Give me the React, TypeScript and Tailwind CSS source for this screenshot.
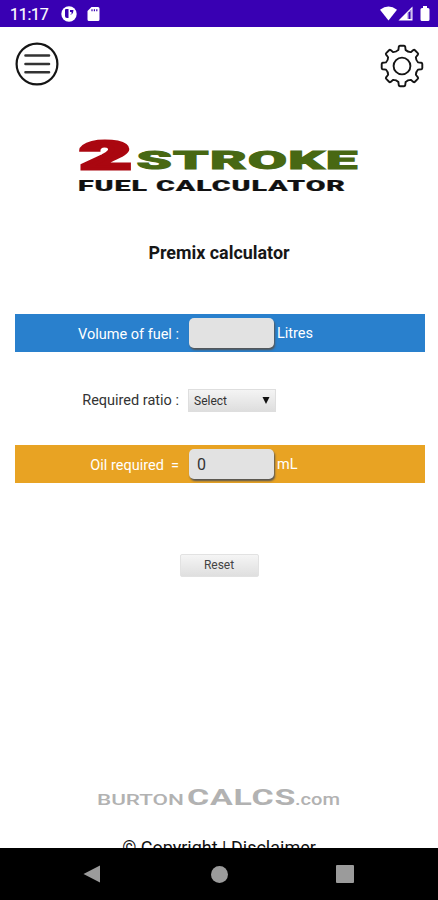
import React from "react";

const point = (x: number, y: number, turn: number) => {
  const a = (turn * Math.PI) / 180;
  const px = x * Math.cos(a) - y * Math.sin(a);
  const py = x * Math.sin(a) + y * Math.cos(a);
  return `${px.toFixed(2)} ${py.toFixed(2)}`;
};

// Eight rounded teeth joined by curved valleys.
const gearPath =
  [0, 45, 90, 135, 180, 225, 270, 315]
    .map(
      (t, i) =>
        `${i === 0 ? "M" : "L"}${point(-3.6, -16, t)} L${point(-3.2, -19.3, t)} Q${point(-3, -20.3, t)} ${point(-2, -20.3, t)} L${point(2, -20.3, t)} Q${point(3, -20.3, t)} ${point(3.2, -19.3, t)} L${point(3.6, -16, t)} Q${point(5.8, -13.8, t)} ${point(8.8, -13.9, t)}`
    )
    .join(" ") + "Z";

function StatusBar() {
  return (
    <div className="flex h-[27px] shrink-0 items-center bg-[#3900b3] pl-[10px] pr-[8px] text-white">
      <span className="w-[51px] pt-[2px] text-[16px] leading-none tracking-[-0.3px] [-webkit-text-stroke:0.2px_white]">11:17</span>
      <svg className="mt-px h-4 w-4" viewBox="0 0 16 16">
        <circle cx="8" cy="8" r="7.7" fill="white" />
        <path d="M4 4Q4 3 5 3h2.500v9H6Q4 12 4 10z" fill="#3900b3" />
        <path d="M9 4h3.500q0 3-2 4.500H9z" fill="#3900b3" />
        <rect x="8.500" y="6" width="2" height="2.500" fill="white" />
      </svg>
      <svg className="ml-[10px] mt-px h-4 w-[13px]" viewBox="0 0 13 16">
        <path d="M4.500 1H11a1.500 1.500 0 0 1 1.500 1.500v11A1.500 1.500 0 0 1 11 15H2a1.500 1.500 0 0 1-1.500-1.500V5z" fill="white" />
        <path d="M5 3.200v2M7.400 3.200v2M9.800 3.200v2" stroke="#3900b3" strokeWidth="1.200" />
      </svg>
      <div className="flex-1" />
      <svg className="mr-px h-[15px] w-[17px]" viewBox="0 0 17 15">
        <path d="M0 3.700Q8.500-2.700 17 3.700L8.500 14.500z" fill="white" />
      </svg>
      <svg className="h-[15px] w-[15px]" viewBox="0 0 15 15">
        <path d="M.500 14.500L14.500.500v14z" fill="white" />
        <path d="M9.500 7l4-4v10h-4z" fill="#9c80dc" />
        <path d="M11.500 6v7" stroke="#3900b3" strokeWidth="1.500" />
      </svg>
      <svg className="ml-[7px] h-[15px] w-[10px]" viewBox="0 0 10 15">
        <path d="M3 0h4v2h1q1.500 0 1.500 1.500v10Q9.500 15 8 15H2Q.500 15 .500 13.500v-10Q.500 2 2 2h1z" fill="white" />
      </svg>
    </div>
  );
}

function FieldBox({ value }: { value: string }) {
  return (
    <div className="flex h-[30px] w-[85px] items-center rounded-[5px] bg-[#e2e2e2] pl-[8px] pt-px text-[16px] text-[#333] shadow-[1px_2px_2px_#555]">
      {value}
    </div>
  );
}

export default function App() {
  return (
    <div className="flex h-[900px] w-[438px] flex-col overflow-hidden bg-white font-['Roboto',sans-serif]">
      <StatusBar />
      <main className="flex h-[821px] shrink-0 flex-col items-center overflow-hidden [&>*]:shrink-0">
        <header className="flex w-full justify-between pl-[15px] pr-[14px] pt-[15px]">
          <svg className="h-11 w-11" viewBox="0 0 44 44" fill="none" stroke="#151515">
            <circle cx="22" cy="22" r="20.400" strokeWidth="2.200" />
            <path d="M10.500 13.500h23.500M10.500 22h23.500M10.500 30.300h23.500" strokeWidth="2.600" stroke="#333" strokeLinecap="round" />
          </svg>
          <svg className="mt-[2px] h-11 w-11" viewBox="-22 -22 44 44" fill="none" stroke="#151515" strokeWidth="1.900" strokeLinejoin="round">
            <path d={gearPath} />
            <circle r="8.400" />
          </svg>
        </header>
        <svg className="mt-[44px] h-[64px] w-[300px]" viewBox="68 132 300 64" fontFamily="Roboto, sans-serif" fontWeight="900">
          <text x="79" y="168.800" fontSize="39" textLength="51" lengthAdjust="spacingAndGlyphs" fill="#aa0710" stroke="#aa0710" strokeWidth="3">2</text>
          <text x="135.500" y="169.200" fontSize="26.500" letterSpacing=".6" textLength="222" lengthAdjust="spacingAndGlyphs" fill="#486813" stroke="#486813" strokeWidth="1">STROKE</text>
          <text x="77" y="190.500" fontSize="15" letterSpacing=".5" textLength="268" lengthAdjust="spacingAndGlyphs" fill="#111" stroke="#111" strokeWidth=".200">FUEL CALCULATOR</text>
        </svg>
        <h1 className="mt-[47px] h-5 text-[17.9px] font-bold leading-5 text-[#171717]">Premix calculator</h1>
        <section className="ml-[15px] mt-[51px] flex h-[38px] w-[410px] items-center self-start bg-[#2980cd] text-[14.5px] text-white">
          <span className="w-[164px] pt-[3px] text-right">Volume of fuel :</span>
          <div className="ml-[10px] mr-[3px]"><FieldBox value="" /></div>
          <span className="pt-[2px]">Litres</span>
        </section>
        <section className="ml-[15px] mt-[37px] flex h-[23px] w-[410px] items-center self-start text-[14.5px] text-[#333]">
          <span className="w-[164px] text-right">Required ratio :</span>
          <div className="ml-[9px] flex h-[23px] w-[88px] items-center justify-between border border-[#dedede] bg-gradient-to-b from-[#f4f4f4] to-[#dedede] pl-[5px] pr-[5px] text-[12px]">
            <span>Select</span>
            <svg className="h-[7px] w-2" viewBox="0 0 8 7"><path d="M.500 0h7L4 7z" fill="#111" /></svg>
          </div>
        </section>
        <section className="ml-[15px] mt-[33px] flex h-[38px] w-[410px] items-center self-start bg-[#e8a323] text-[14.5px] text-white">
          <span className="w-[164px] whitespace-pre pt-[3px] text-right">Oil required  =</span>
          <div className="ml-[10px] mr-[3px]"><FieldBox value="0" /></div>
          <span className="pt-[2px]">mL</span>
        </section>
        <button className="mt-[71px] h-[23px] w-[79px] rounded-[2px] border border-[#e2e2e2] bg-gradient-to-b from-[#f5f5f5] to-[#dfdfdf] text-[12px] leading-[21px] text-[#444]">Reset</button>
        <svg className="mt-[207px] h-[28px] w-[260px]" viewBox="88 784 260 28" fontFamily="Roboto, sans-serif" fill="#b2b2b2">
          <text x="96" y="805" fontSize="15.500" fontWeight="500" textLength="87" lengthAdjust="spacingAndGlyphs">BURTON</text>
          <text x="186" y="805" fontSize="22" fontWeight="700" letterSpacing=".5" textLength="109" lengthAdjust="spacingAndGlyphs">CALCS</text>
          <text x="294" y="805" fontSize="16" fontWeight="500" textLength="45" lengthAdjust="spacingAndGlyphs">.com</text>
        </svg>
        <footer className="mt-[26px] text-[18px] leading-5 text-[#111]">© Copyright | Disclaimer</footer>
      </main>
      <nav className="flex h-[52px] shrink-0 items-center bg-black pl-[83px]">
        <svg className="h-[18px] w-[18px]" viewBox="0 0 18 18"><path d="M.500 9L17 .500v17z" fill="#9b9b9b" /></svg>
        <div className="ml-[110px] h-[17px] w-[17px] rounded-full bg-[#9b9b9b]" />
        <div className="ml-[108px] h-[18px] w-[18px] rounded-[1px] bg-[#9b9b9b]" />
      </nav>
    </div>
  );
}
